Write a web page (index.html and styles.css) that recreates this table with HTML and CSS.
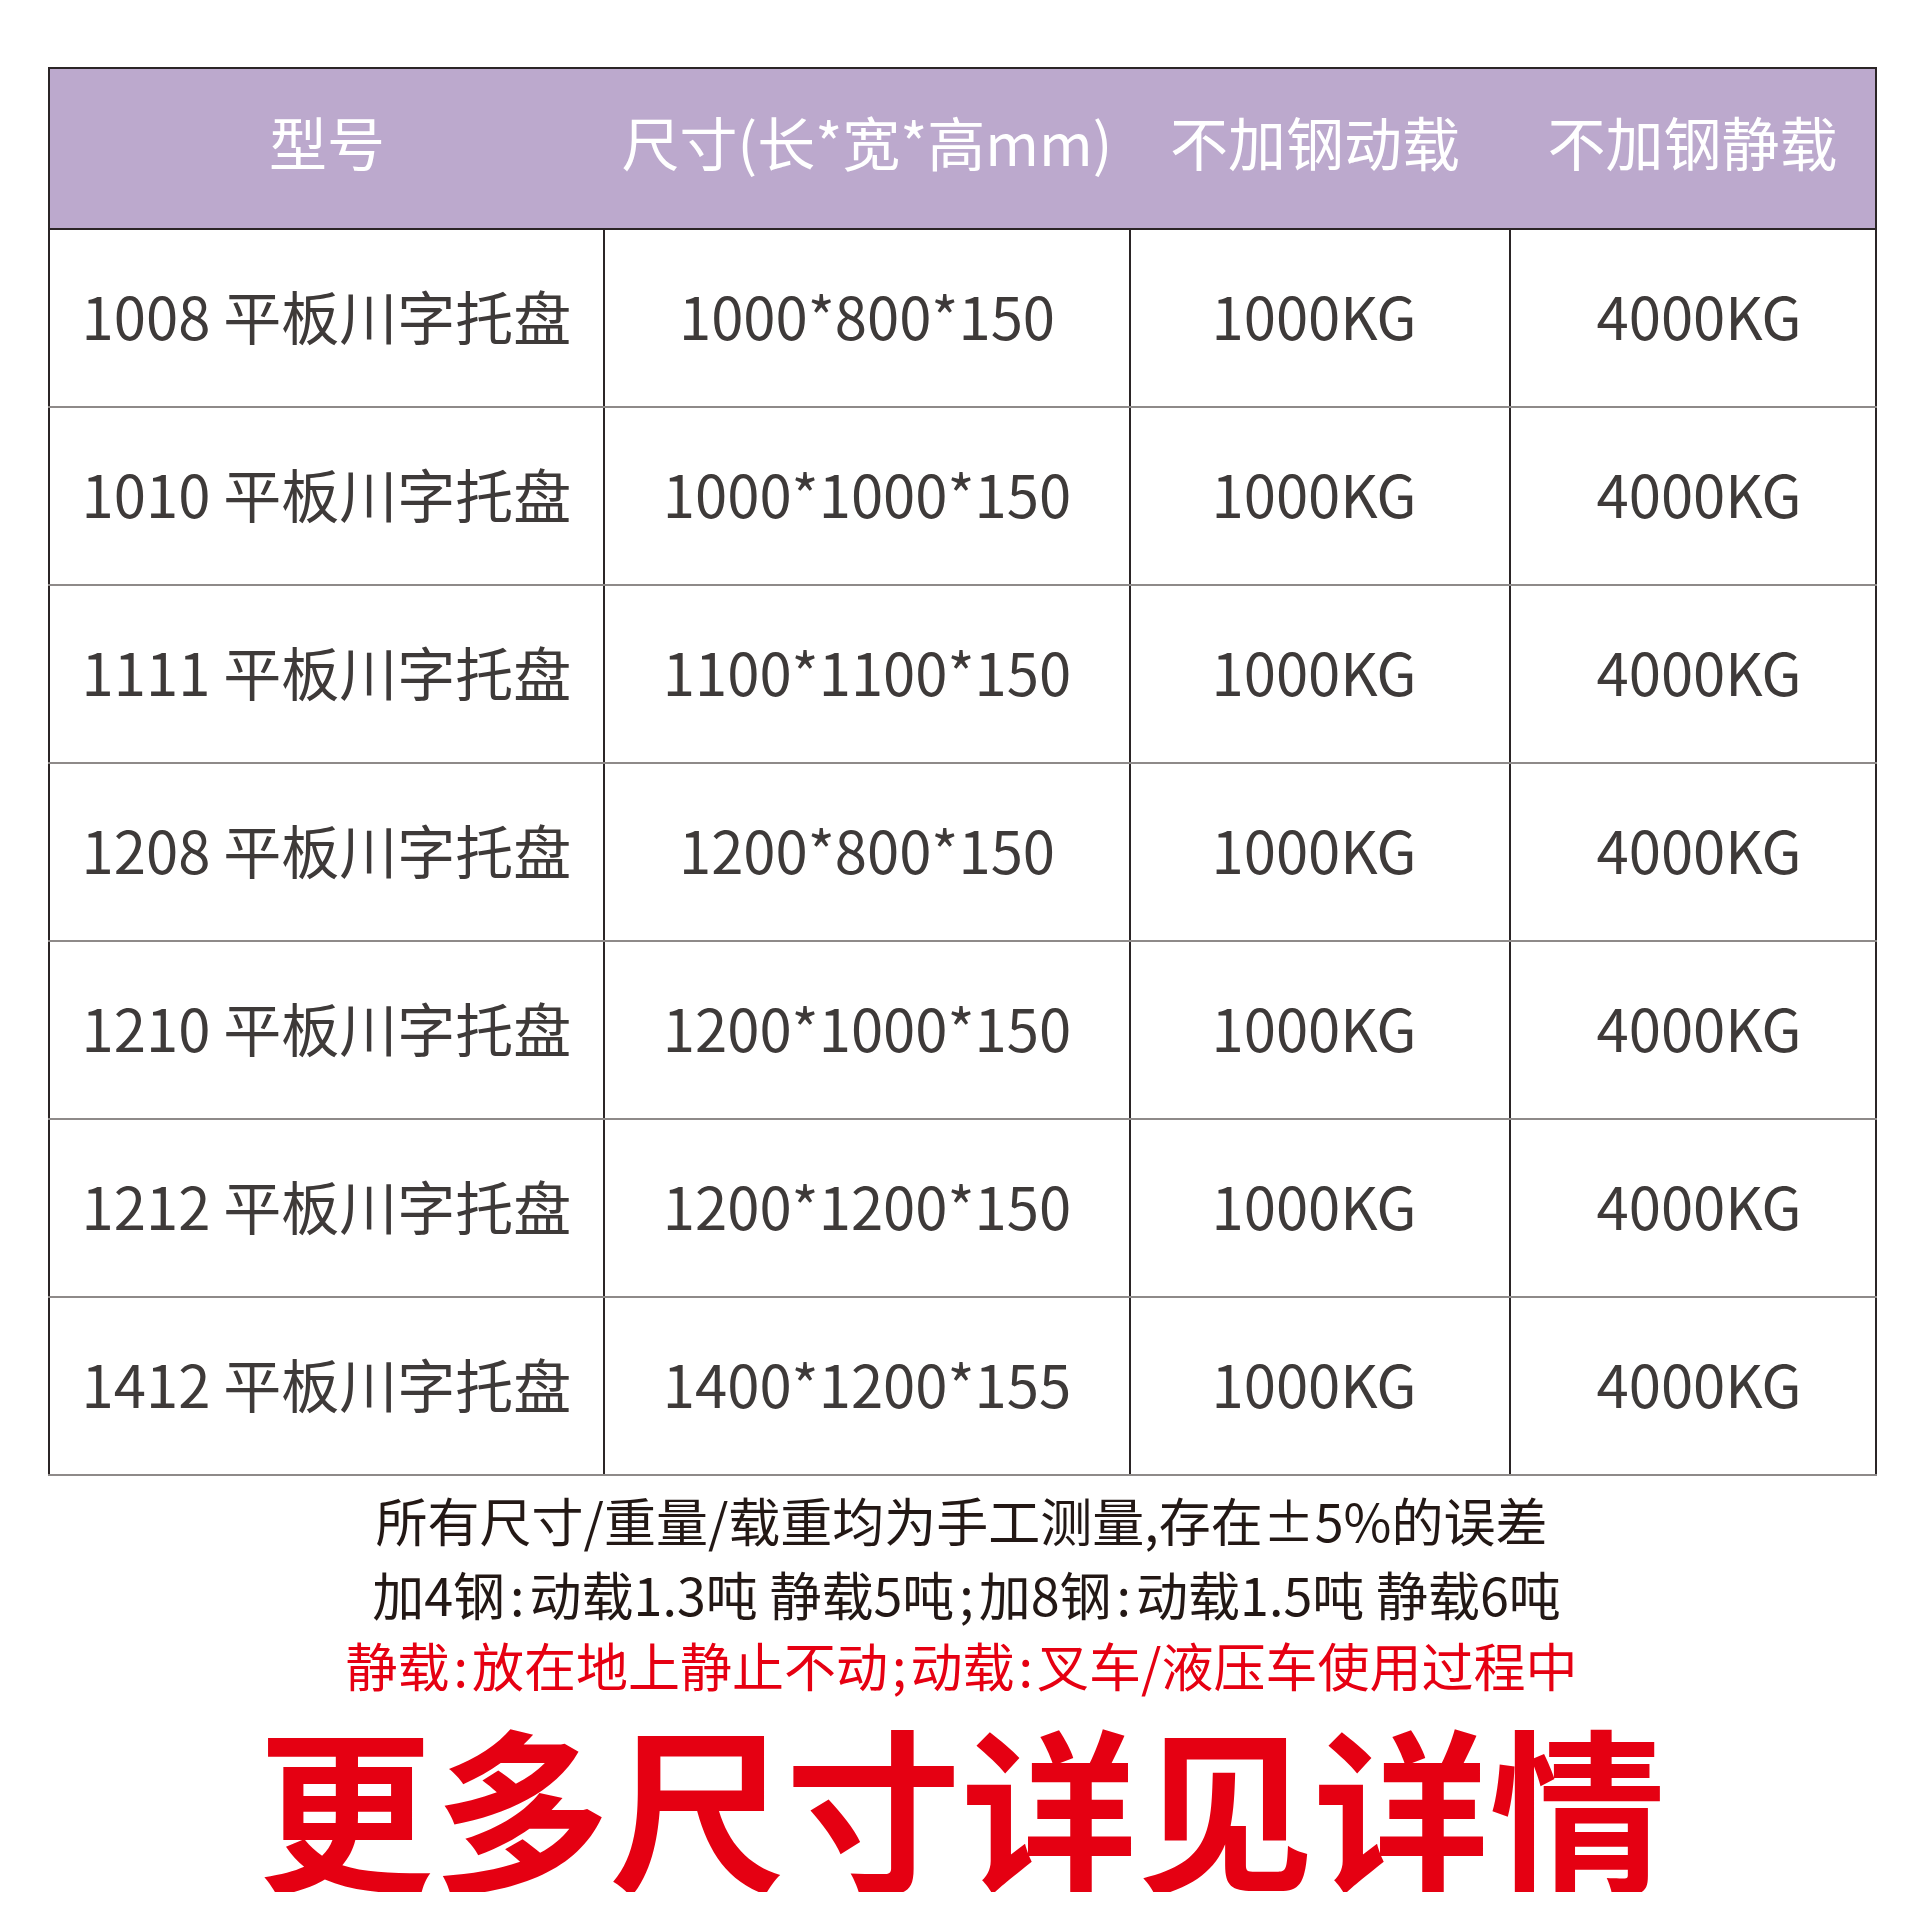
FILE: index.html
```html
<!DOCTYPE html>
<html lang="zh-CN">
<head>
<meta charset="utf-8">
<title>平板川字托盘 尺寸表</title>
<link rel="stylesheet" href="styles.css">
</head>
<body>
<div class="page">
  <table class="spec">
    <colgroup>
      <col class="c1"><col class="c2"><col class="c3"><col class="c4">
    </colgroup>
    <thead>
      <tr>
        <th>型号</th>
        <th>尺寸(长*宽*高mm)</th>
        <th class="col3">不加钢动载</th>
        <th>不加钢静载</th>
      </tr>
    </thead>
    <tbody>
      <tr><td>1008 平板川字托盘</td><td>1000*800*150</td><td class="col3">1000KG</td><td class="col4">4000KG</td></tr>
      <tr><td>1010 平板川字托盘</td><td>1000*1000*150</td><td class="col3">1000KG</td><td class="col4">4000KG</td></tr>
      <tr><td>1111 平板川字托盘</td><td>1100*1100*150</td><td class="col3">1000KG</td><td class="col4">4000KG</td></tr>
      <tr><td>1208 平板川字托盘</td><td>1200*800*150</td><td class="col3">1000KG</td><td class="col4">4000KG</td></tr>
      <tr><td>1210 平板川字托盘</td><td>1200*1000*150</td><td class="col3">1000KG</td><td class="col4">4000KG</td></tr>
      <tr><td>1212 平板川字托盘</td><td>1200*1200*150</td><td class="col3">1000KG</td><td class="col4">4000KG</td></tr>
      <tr><td>1412 平板川字托盘</td><td>1400*1200*155</td><td class="col3">1000KG</td><td class="col4">4000KG</td></tr>
    </tbody>
  </table>
  <div class="notes">
    <p class="note note-1">所有尺寸/重量/载重均为手工测量,存在±5%的误差</p>
    <p class="note note-2">加4钢<span class="sep">:</span>动载1.3吨 静载5吨<span class="sep">;</span>加8钢<span class="sep">:</span>动载1.5吨 静载6吨</p>
    <p class="note note-red">静载<span class="sep">:</span>放在地上静止不动<span class="sep">;</span>动载<span class="sep">:</span>叉车/液压车使用过程中</p>
    <p class="headline">更多尺寸详见详情</p>
  </div>
</div>
</body>
</html>
```

FILE: styles.css
```css
html, body {
  margin: 0;
  padding: 0;
  background: #ffffff;
}

body {
  font-family: "Noto Sans CJK SC", "Noto Sans", sans-serif;
  color: #3e3a39;
}

.page {
  width: 1919px;
  padding-top: 67px;
  box-sizing: border-box;
}

.spec {
  margin-left: 48px;
  width: 1827px;
  border-collapse: collapse;
  table-layout: fixed;
}

.c1 { width: 555px; }
.c2 { width: 526px; }
.c3 { width: 380px; }
.c4 { width: 366px; }

.spec th {
  height: 143px;
  padding: 0 0 16px;
  background: #bca9cd;
  color: #ffffff;
  font-weight: 400;
  font-size: 58px;
  line-height: 1;
  text-align: center;
  vertical-align: middle;
  border-top: 2px solid #2b2526;
  border-bottom: 2px solid #2b2526;
  white-space: nowrap;
}

.spec th:first-child { border-left: 2px solid #2b2526; }
.spec th:last-child { border-right: 2px solid #2b2526; }

.spec th.col3 { padding-right: 10px; }

.spec td {
  height: 170px;
  padding: 0 0 6px;
  font-size: 58px;
  line-height: 1;
  text-align: center;
  vertical-align: middle;
  color: #3e3a39;
  border-left: 2px solid #2b2526;
  border-right: 2px solid #2b2526;
  border-bottom: 2px solid #8e8a89;
  white-space: nowrap;
}

.spec td.col3 { padding-right: 12px; }
.spec td.col4 { padding-left: 12px; }

.notes {
  display: flex;
  flex-direction: column;
  align-items: center;
  width: 100%;
  padding-left: 4px;
  box-sizing: border-box;
}

.note {
  margin: 0;
  font-size: 52px;
  line-height: 60px;
  color: #231815;
  white-space: nowrap;
}

.sep {
  padding: 0 4px;
}

.note-2 .sep { padding: 0 5px; }

.note-1 { margin-top: 14px; }
.note-2 { margin-top: 14px; padding-left: 10px; }

.note-red {
  margin-top: 11px;
  color: #e60012;
}

.headline {
  margin: 21px 0 0;
  font-size: 176px;
  line-height: 176px;
  font-weight: 700;
  color: #e50012;
  white-space: nowrap;
}
```
